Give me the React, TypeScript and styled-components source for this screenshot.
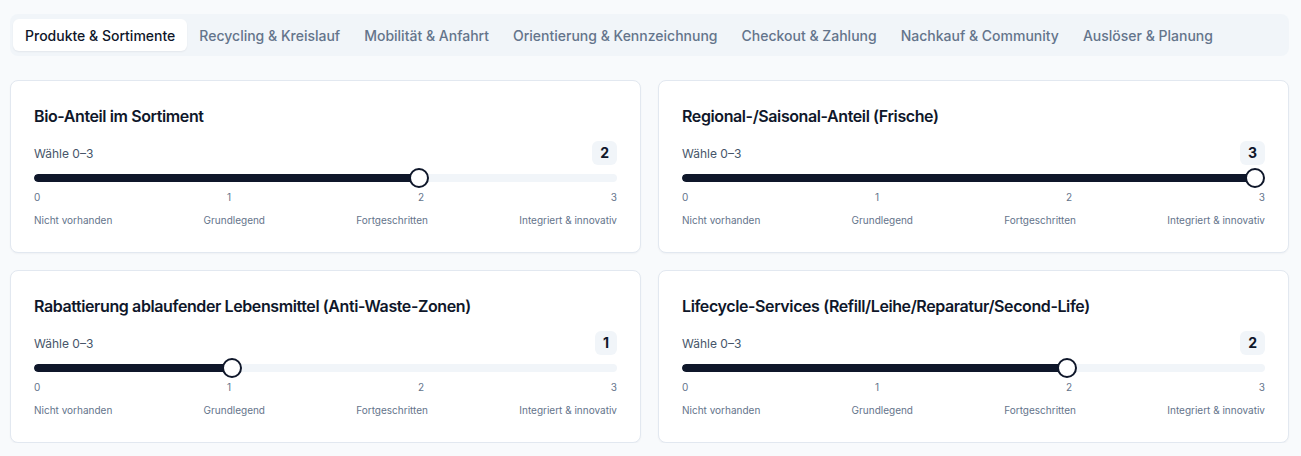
import { FC } from "react";
import styled, { createGlobalStyle } from "styled-components";

const GlobalStyle = createGlobalStyle`
  html, body {
    margin: 0;
    padding: 0;
    background: #f8fafc;
    font-family: Inter, "Noto Sans", "Liberation Sans", sans-serif;
    color: #0f172a;
  }
  * { box-sizing: border-box; }
`;

const Page = styled.div`
  padding: 14px 12px 0 10px;
`;

const TabBar = styled.div`
  display: flex;
  align-items: center;
  height: 42px;
  padding: 0 3px;
  background: #f1f5f9;
  border-radius: 8px;
`;

const Tab = styled.button<{ $active?: boolean }>`
  border: none;
  font-family: inherit;
  font-size: 14px;
  font-weight: 500;
  height: 32px;
  padding: 0 12px;
  border-radius: 6px;
  cursor: pointer;
  background: ${(p) => (p.$active ? "#ffffff" : "transparent")};
  color: ${(p) => (p.$active ? "#0f172a" : "#64748b")};
  box-shadow: ${(p) => (p.$active ? "0 1px 2px rgba(15, 23, 42, 0.06)" : "none")};
`;

const Grid = styled.div`
  display: grid;
  grid-template-columns: 1fr 1fr;
  column-gap: 17px;
  row-gap: 17px;
  margin-top: 24px;
`;

const Card = styled.div`
  background: #ffffff;
  border: 1px solid #e2e8f0;
  border-radius: 8px;
  box-shadow: 0 1px 2px rgba(15, 23, 42, 0.04);
  padding: 23px 23px 25px 23px;
`;

const Title = styled.h3`
  margin: 0;
  font-size: 16px;
  line-height: 24px;
  font-weight: 600;
  letter-spacing: -0.025em;
  color: #0f172a;
`;

const HeadRow = styled.div`
  display: flex;
  align-items: center;
  justify-content: space-between;
  margin-top: 13px;
  height: 24px;
`;

const Hint = styled.span`
  font-size: 12px;
  color: #475569;
`;

const Badge = styled.span`
  font-size: 14px;
  font-weight: 700;
  line-height: 24px;
  padding: 0 8px;
  border-radius: 6px;
  background: #f1f5f9;
  color: #0f172a;
`;

const SliderRoot = styled.div`
  position: relative;
  height: 20px;
  margin-top: 3px;
  display: flex;
  align-items: center;
`;

const Track = styled.div`
  position: relative;
  width: 100%;
  height: 8px;
  border-radius: 999px;
  background: #f1f5f9;
  overflow: hidden;
`;

const Range = styled.div`
  height: 100%;
  background: #0f172a;
  border-radius: 999px;
`;

const Thumb = styled.div`
  position: absolute;
  top: 0;
  width: 20px;
  height: 20px;
  border-radius: 50%;
  background: #ffffff;
  border: 2px solid #0f172a;
`;

const Spread = styled.div<{ $gap: number }>`
  display: flex;
  justify-content: space-between;
  margin-top: ${(p) => p.$gap}px;
  font-size: 10px;
  line-height: 14px;
  color: #64748b;
`;

const tabs = [
  "Produkte & Sortimente",
  "Recycling & Kreislauf",
  "Mobilität & Anfahrt",
  "Orientierung & Kennzeichnung",
  "Checkout & Zahlung",
  "Nachkauf & Community",
  "Auslöser & Planung",
];

const levels = ["Nicht vorhanden", "Grundlegend", "Fortgeschritten", "Integriert & innovativ"];

const items = [
  { title: "Bio-Anteil im Sortiment", value: 2 },
  { title: "Regional-/Saisonal-Anteil (Frische)", value: 3 },
  { title: "Rabattierung ablaufender Lebensmittel (Anti-Waste-Zonen)", value: 1 },
  { title: "Lifecycle-Services (Refill/Leihe/Reparatur/Second-Life)", value: 2 },
];

const Scale: FC<{ value: number }> = ({ value }) => {
  const ratio = value / 3;
  // thumb stays inside the track, like an inset slider thumb
  const thumbLeft = `calc((100% - 20px) * ${ratio})`;
  return (
    <SliderRoot>
      <Track>
        <Range style={{ width: `calc((100% - 20px) * ${ratio} + 10px)` }} />
      </Track>
      <Thumb style={{ left: thumbLeft }} />
    </SliderRoot>
  );
};

const RatingCard: FC<{ title: string; value: number }> = ({ title, value }) => (
  <Card>
    <Title>{title}</Title>
    <HeadRow>
      <Hint>Wähle 0–3</Hint>
      <Badge>{value}</Badge>
    </HeadRow>
    <Scale value={value} />
    <Spread $gap={2}>
      {[0, 1, 2, 3].map((n) => (
        <span key={n}>{n}</span>
      ))}
    </Spread>
    <Spread $gap={9}>
      {levels.map((l) => (
        <span key={l}>{l}</span>
      ))}
    </Spread>
  </Card>
);

const App: FC = () => (
  <>
    <GlobalStyle />
    <Page>
      <TabBar>
        {tabs.map((t, i) => (
          <Tab key={t} $active={i === 0}>
            {t}
          </Tab>
        ))}
      </TabBar>
      <Grid>
        {items.map((it) => (
          <RatingCard key={it.title} title={it.title} value={it.value} />
        ))}
      </Grid>
    </Page>
  </>
);

export default App;
